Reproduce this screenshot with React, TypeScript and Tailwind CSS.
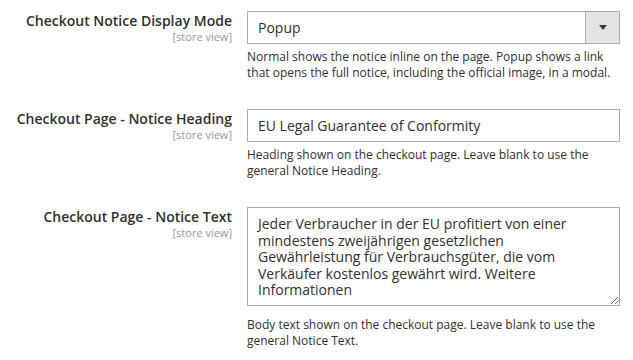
import React from "react";

const noticeText =
  "Jeder Verbraucher in der EU profitiert von einer mindestens zweijährigen gesetzlichen Gewährleistung für Verbrauchsgüter, die vom Verkäufer kostenlos gewährt wird. Weitere Informationen";

function FieldLabel({ text }: { text: string }) {
  return (
    <div className="w-[232px] shrink-0 text-right">
      <div className="pt-[2px] text-[14px] font-semibold leading-[16px] text-[#303030]">{text}</div>
      <div className="mt-[2px] text-[11px] leading-[11px] text-[#999999]">[store view]</div>
    </div>
  );
}

function Note({ children, className = "" }: { children: React.ReactNode; className?: string }) {
  return <div className={`text-[12px] leading-4 text-[#303030] ${className}`}>{children}</div>;
}

export default function App() {
  return (
    <div
      className="flex min-h-[360px] w-[633px] flex-col gap-[28px] bg-white pt-[11px]"
      style={{ fontFamily: '"Open Sans", "Liberation Sans", sans-serif' }}
    >
      {/* Display mode */}
      <div className="flex">
        <FieldLabel text="Checkout Notice Display Mode" />
        <div className="ml-[15px] w-[373px]">
          <div className="flex h-[33px] border border-[#adadad] bg-white">
            <div className="flex flex-1 items-center px-[10px] text-[14px] text-[#303030]">Popup</div>
            <div className="flex w-[34px] items-center justify-center border-l border-[#adadad] bg-[#e3e3e3]">
              <svg width="8" height="5" viewBox="0 0 8 5">
                <polygon points="0,0 8,0 4,5" fill="#41362f" />
              </svg>
            </div>
          </div>
          <Note className="mt-[5px]">
            Normal shows the notice inline on the page. Popup shows a link that opens the full notice, including the
            official image, in a modal.
          </Note>
        </div>
      </div>

      {/* Heading */}
      <div className="flex">
        <FieldLabel text="Checkout Page - Notice Heading" />
        <div className="ml-[15px] w-[373px]">
          <input
            readOnly
            value="EU Legal Guarantee of Conformity"
            className="block h-[33px] w-full border border-[#adadad] bg-white px-[10px] text-[14px] text-[#303030] outline-none"
          />
          <Note className="mt-[5px]">
            Heading shown on the checkout page. Leave blank to use the general Notice Heading.
          </Note>
        </div>
      </div>

      {/* Text */}
      <div className="flex">
        <FieldLabel text="Checkout Page - Notice Text" />
        <div className="ml-[15px] w-[373px]">
          <textarea
            readOnly
            value={noticeText}
            className="block h-[99px] w-full border border-[#adadad] bg-white px-[10px] py-[8px] text-[14px] leading-[1.18] text-[#303030] outline-none"
          />
          <Note className="mt-[11px]">
            Body text shown on the checkout page. Leave blank to use the general Notice Text.
          </Note>
        </div>
      </div>
    </div>
  );
}
